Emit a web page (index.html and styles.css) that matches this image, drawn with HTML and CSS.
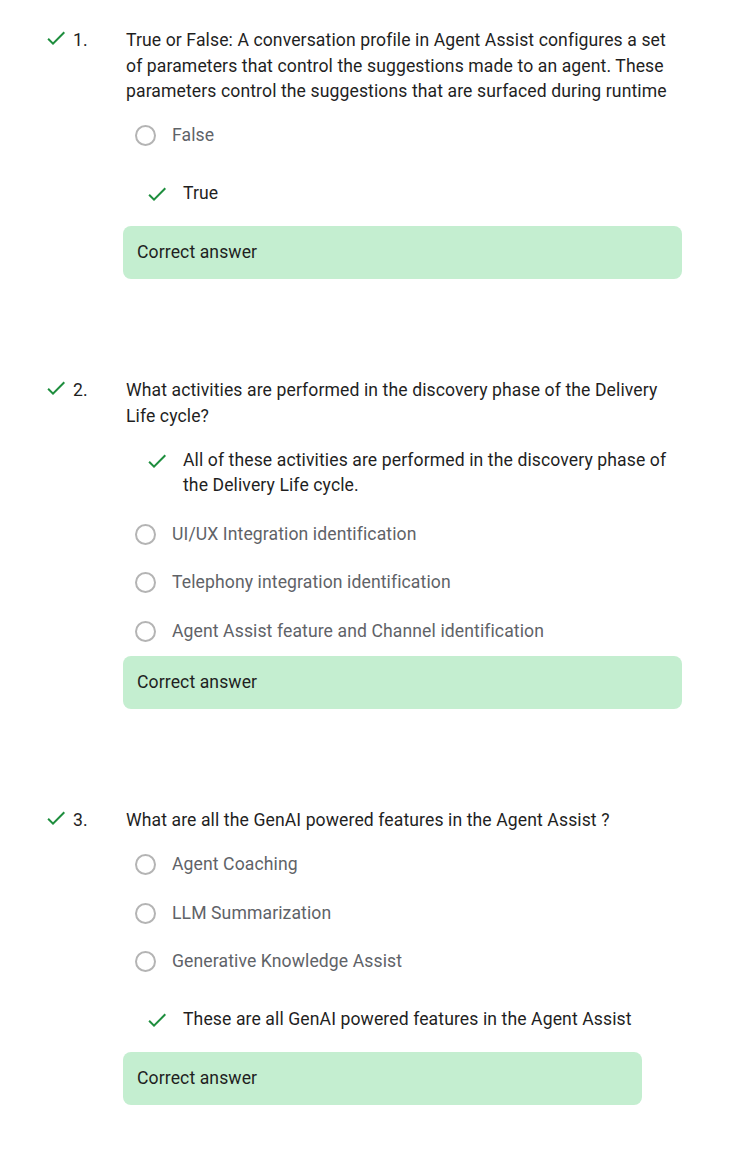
FILE: index.html
```html
<!DOCTYPE html>
<html lang="en">
<head>
<meta charset="utf-8">
<title>Quiz results</title>
<link rel="stylesheet" href="styles.css">
</head>
<body>
<main class="quiz">

  <section class="question">
    <div class="marker">
      <svg class="check" viewBox="0 0 24 24"><path d="M9 16.17L4.83 12l-1.42 1.41L9 19 21 7l-1.41-1.41z"/></svg>
      <span class="num">1.</span>
    </div>
    <div class="content">
      <p class="qtext">True or False: A conversation profile in Agent Assist configures a set of parameters that control the suggestions made to an agent. These parameters control the suggestions that are surfaced during runtime</p>
      <div class="option radio-opt"><span class="radio"></span><span class="otext">False</span></div>
      <div class="option picked gap-top gap-bottom">
        <svg class="check" viewBox="0 0 24 24"><path d="M9 16.17L4.83 12l-1.42 1.41L9 19 21 7l-1.41-1.41z"/></svg>
        <span class="otext">True</span>
      </div>
      <div class="feedback">Correct answer</div>
    </div>
  </section>

  <section class="question">
    <div class="marker">
      <svg class="check" viewBox="0 0 24 24"><path d="M9 16.17L4.83 12l-1.42 1.41L9 19 21 7l-1.41-1.41z"/></svg>
      <span class="num">2.</span>
    </div>
    <div class="content">
      <p class="qtext">What activities are performed in the discovery phase of the Delivery Life cycle?</p>
      <div class="option picked">
        <svg class="check" viewBox="0 0 24 24"><path d="M9 16.17L4.83 12l-1.42 1.41L9 19 21 7l-1.41-1.41z"/></svg>
        <span class="otext">All of these activities are performed in the discovery phase of the Delivery Life cycle.</span>
      </div>
      <div class="option radio-opt"><span class="radio"></span><span class="otext">UI/UX Integration identification</span></div>
      <div class="option radio-opt"><span class="radio"></span><span class="otext">Telephony integration identification</span></div>
      <div class="option radio-opt"><span class="radio"></span><span class="otext">Agent Assist feature and Channel identification</span></div>
      <div class="feedback">Correct answer</div>
    </div>
  </section>

  <section class="question">
    <div class="marker">
      <svg class="check" viewBox="0 0 24 24"><path d="M9 16.17L4.83 12l-1.42 1.41L9 19 21 7l-1.41-1.41z"/></svg>
      <span class="num">3.</span>
    </div>
    <div class="content">
      <p class="qtext">What are all the GenAI powered features in the Agent Assist ?</p>
      <div class="option radio-opt"><span class="radio"></span><span class="otext">Agent Coaching</span></div>
      <div class="option radio-opt"><span class="radio"></span><span class="otext">LLM Summarization</span></div>
      <div class="option radio-opt"><span class="radio"></span><span class="otext">Generative Knowledge Assist</span></div>
      <div class="option picked gap-top gap-bottom">
        <svg class="check" viewBox="0 0 24 24"><path d="M9 16.17L4.83 12l-1.42 1.41L9 19 21 7l-1.41-1.41z"/></svg>
        <span class="otext">These are all GenAI powered features in the Agent Assist</span>
      </div>
      <div class="feedback">Correct answer</div>
    </div>
  </section>

</main>
</body>
</html>
```

FILE: styles.css
```css
* { box-sizing: border-box; }

html, body {
  margin: 0;
  padding: 0;
  background: #ffffff;
}

body {
  font-family: Roboto, "Noto Sans", Arial, sans-serif;
  font-size: 17.6px;
  letter-spacing: 0.1px;
  line-height: 25.5px;
  color: #1f1f1f;
}

.quiz {
  display: flex;
  flex-direction: column;
  align-items: flex-start;
  gap: 99px;
  padding: 28px 0 40px 44px;
}

.question {
  display: flex;
  align-items: flex-start;
}

.marker {
  width: 79px;
  flex: none;
  display: flex;
  align-items: center;
  gap: 5px;
  height: 25.5px;
  color: #1f1f1f;
}

.marker .check {
  margin-bottom: 6px;
}

.check {
  width: 24px;
  height: 24px;
  flex: none;
  fill: #1e8e3e;
}

.content {
  display: flex;
  flex-direction: column;
  width: fit-content;
  max-width: 559px;
}

.qtext {
  margin: 0 0 7px;
  padding-left: 3px;
}

.option {
  display: flex;
  align-items: center;
  padding: 11.5px 10px 11.5px 12px;
}

.radio-opt .otext {
  color: #5f6368;
}

.radio {
  width: 21px;
  height: 21px;
  flex: none;
  border: 2px solid #b4b4b4;
  border-radius: 50%;
  margin-right: 16px;
}

.picked {
  align-items: flex-start;
  padding-left: 22px;
}

.picked .check {
  margin-right: 14px;
  margin-top: 1px;
}

.picked .otext {
  color: #1f1f1f;
}

.gap-top { margin-top: 9.5px; }
.gap-bottom { margin-bottom: 7.5px; }

.feedback {
  background: #c4eed0;
  border-radius: 8px;
  padding: 14px 14px;
  color: #1f1f1f;
}
```
